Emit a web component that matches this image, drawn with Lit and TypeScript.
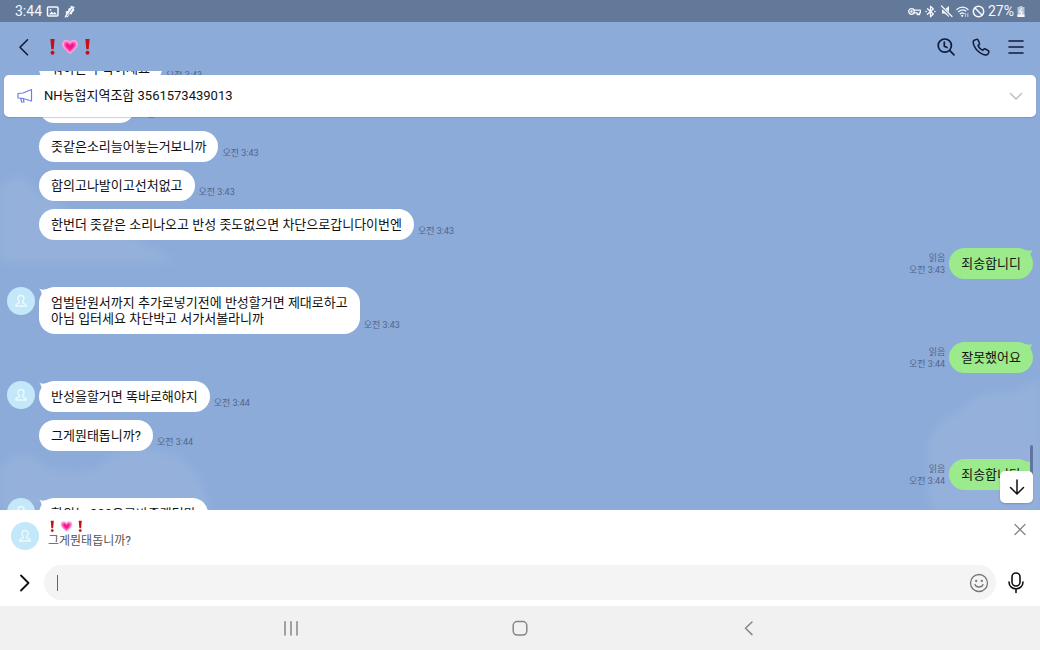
import { LitElement, html, css, svg, nothing } from "lit";
import { customElement, property, state } from "lit/decorators.js";

interface Message {
  mine?: boolean;
  first?: boolean;
  lines: string[];
  time: string;
}

const MESSAGES: Message[] = [
  { lines: ["뭐하는 수작이세요"], time: "오전 3:43" },
  { lines: ["장난하십니까"], time: "오전 3:43" },
  { lines: ["좃같은소리늘어놓는거보니까"], time: "오전 3:43" },
  { lines: ["합의고나발이고선처없고"], time: "오전 3:43" },
  { lines: ["한번더 좃같은 소리나오고 반성 좃도없으면 차단으로갑니다이번엔"], time: "오전 3:43" },
  { mine: true, lines: ["죄송합니디"], time: "오전 3:43" },
  { first: true, lines: ["엄벌탄원서까지 추가로넣기전에 반성할거면 제대로하고", "아님 입터세요 차단박고 서가서볼라니까"], time: "오전 3:43" },
  { mine: true, lines: ["잘못했어요"], time: "오전 3:44" },
  { first: true, lines: ["반성을할거면 똑바로해야지"], time: "오전 3:44" },
  { lines: ["그게뭔태돕니까?"], time: "오전 3:44" },
  { mine: true, lines: ["죄송합니다"], time: "오전 3:44" },
  { first: true, lines: ["합의는 300은고바줄랬더만"], time: "오전 3:44" },
];

const heart = svg`
  <path d="M10 18C6 14.5 1.2 11.2 1.2 6.8 1.2 3.800 3.400 2 5.800 2 7.700 2 9.200 3 10 4.500 10.800 3 12.300 2 14.200 2c2.400 0 4.600 1.800 4.600 4.800C18.800 11.200 14 14.500 10 18Z" fill="#ffa0dc"/>
  <path d="M10 15.600C7 13 3.400 10.400 3.400 7.200 3.400 5.300 4.600 4.200 6.200 4.200c1.700 0 3 1.200 3.800 2.800.8-1.600 2.100-2.800 3.800-2.800 1.600 0 2.800 1.100 2.800 3 0 3.200-3.600 5.800-6.600 8.400Z" fill="#ff4fb4"/>
  <path d="M10 13.600C8 11.800 5.400 10 5.400 7.800c0-1 .6-1.600 1.400-1.600C8.200 6.200 9.400 7.400 10 9c.6-1.600 1.800-2.800 3.200-2.800.8 0 1.400.6 1.400 1.600 0 2.200-2.600 4-4.600 5.800Z" fill="#f5168c"/>`;
const bang = svg`
  <path d="M2.600 1h4.800L6.300 12.500H3.700Z" fill="#c80f14"/><circle cx="5" cy="16.300" r="2.200" fill="#c80f14"/>`;

@customElement("room-name")
export class RoomName extends LitElement {
  static styles = css`
    :host { display: flex; align-items: center; }
    .bang { height: var(--mark, 18px); }
    .heart { height: var(--mark, 18px); margin: 0 4px; }
  `;
  render() {
    return html`
      <svg class="bang" viewBox="0 0 10 20" aria-hidden="true">${bang}</svg>
      <svg class="heart" viewBox="0 0 20 20" role="img" aria-label="❗💗❗">${heart}</svg>
      <svg class="bang" viewBox="0 0 10 20" aria-hidden="true">${bang}</svg>`;
  }
}

@customElement("user-avatar")
export class UserAvatar extends LitElement {
  static styles = css`
    :host { display: block; width: 28px; height: 28px; }
    .face { display: block; width: 100%; height: 100%; }
  `;
  render() {
    return html`<svg class="face" viewBox="0 0 28 28" aria-hidden="true">
      <circle cx="14" cy="14" r="14" fill="#c3e8f9"/>
      <path d="M14 8.500c-1.900 0-3 1.300-3 3 0 1.300.6 2.300 1.300 2.900v1.400c-1.800.5-3.500 1-3.500 3.200h10.400c0-2.200-1.700-2.700-3.500-3.200v-1.400c.7-.6 1.300-1.600 1.300-2.900 0-1.700-1.100-3-3-3Z" fill="none" stroke="#eefaff" stroke-width="1.300" stroke-linejoin="round"/>
    </svg>`;
  }
}

@customElement("chat-message")
export class ChatMessage extends LitElement {
  @property({ attribute: false }) message!: Message;

  static styles = css`
    :host { display: block; }
    .row { display: grid; grid-template-columns: 28px auto auto; justify-content: start; column-gap: 4px; padding: 0 7px; }
    .row.mine { display: flex; justify-content: flex-end; gap: 4px; }
    .wrap { position: relative; }
    .bubble { margin: 0; padding: 8px 12px 7px; border-radius: 16px; background: #fff; color: #111; font-size: 13px; line-height: 16px; }
    .mine .bubble { background: #9bea8c; }
    .line { display: block; white-space: nowrap; }
    .tail { position: absolute; top: 0; left: 0; width: 12px; height: 12px; }
    .mine .tail { left: auto; right: 0; transform: scaleX(-1); }
    .meta { align-self: end; display: flex; flex-direction: column; padding-bottom: 3px; color: #52658a; font-size: 9px; line-height: 12px; white-space: nowrap; }
    .mine .meta { text-align: right; }
  `;

  render() {
    const m = this.message;
    const tail = m.first || m.mine
      ? html`<svg class="tail" viewBox="0 0 12 12" aria-hidden="true">
          <path d="M0 1C2 3.500 5 3 11 1L3 10C3 6 2 4 0 1Z" fill=${m.mine ? "#9bea8c" : "#ffffff"}/></svg>`
      : nothing;
    const bubble = html`<div class="wrap">${tail}
      <p class="bubble">${m.lines.map((l) => html`<span class="line">${l}</span>`)}</p></div>`;
    if (m.mine) {
      return html`<div class="row mine">
        <div class="meta"><span>읽음</span><time>${m.time}</time></div>${bubble}</div>`;
    }
    return html`<div class="row">
      ${m.first ? html`<user-avatar></user-avatar>` : html`<span></span>`}
      ${bubble}
      <div class="meta"><time>${m.time}</time></div></div>`;
  }
}

@customElement("app-root")
export class AppRoot extends LitElement {
  @state() private draft = "";

  static styles = css`
    :host { display: flex; flex-direction: column; height: 100vh; overflow: hidden; background: #8cabd9; color: #111; font-family: Roboto, "Noto Sans CJK KR", sans-serif; }
    button { display: grid; place-items: center; margin: 0; padding: 0; border: 0; background: none; color: inherit; font: inherit; }
    svg { display: block; fill: none; stroke: currentColor; stroke-linecap: round; stroke-linejoin: round; }
    .status { flex: none; display: flex; align-items: center; justify-content: space-between; height: 22px; padding: 0 15px; background: #637999; color: #f5f8ff; font-size: 14px; line-height: 22px; }
    .group { display: flex; align-items: center; gap: 4px; }
    .group.right { gap: 3px; }
    .sicon { width: 13px; height: 13px; }
    .narrow { width: 8px; height: 13px; }
    .header { flex: none; display: flex; align-items: center; height: 49px; padding: 0 14px 0 12px; color: #101a3a; }
    .title { flex: 1; display: flex; margin: 0 0 0 12px; font-size: 16px; }
    .actions { display: flex; gap: 15px; }
    .icon { width: 20px; height: 20px; }
    .icon24 { width: 24px; height: 24px; }
    .chat { flex: 1; position: relative; min-height: 0; }
    .sky { position: absolute; inset: 0; width: 100%; height: 100%; stroke: none; }
    .list { position: relative; display: flex; flex-direction: column; gap: 8px; height: 100%; overflow-y: auto; scrollbar-width: none; }
    .thumb { position: absolute; right: 7px; bottom: 26px; width: 3px; height: 39px; border-radius: 2px; background: #5f759d; }
    .down { position: absolute; right: 7px; bottom: 7px; width: 33px; height: 32px; border-radius: 5px; background: #fff; box-shadow: 0 1px 2px #4a628a66; }
    .notice { position: absolute; top: 4px; left: 4px; right: 4px; display: flex; align-items: center; gap: 10px; padding: 13px 12px; border-radius: 5px; background: #fff; box-shadow: 0 1px 1px #5c75a455; font-size: 13px; line-height: 16px; }
    .notice-text { flex: 1; margin: 0; }
    .horn { color: #6780e8; width: 18px; height: 16px; }
    .fold { color: #b5b5b5; width: 16px; height: 16px; }
    .preview { flex: none; display: flex; align-items: flex-start; gap: 9px; padding: 10px 10px 0 11px; background: #fff; }
    .preview-body { flex: 1; --mark: 13px; }
    .preview-name { padding-left: 1px; }
    .preview-text { margin: 0; color: #555; font-size: 12px; line-height: 16px; }
    .preview-avatar { margin-top: 2px; }
    .close { color: #888; }
    .composer { flex: none; display: flex; align-items: center; gap: 8px; padding: 15px 12px 6px; background: #fff; }
    .field { flex: 1; display: flex; align-items: center; height: 35px; padding: 0 7px 0 13px; border-radius: 18px; background: #f4f4f4; }
    .caret { width: 1px; height: 16px; background: #666; }
    .input { flex: 1; min-width: 0; border: 0; padding: 0; outline: 0; background: none; font: inherit; font-size: 14px; }
    .smile { color: #777; }
    .nav { flex: none; display: flex; justify-content: space-around; align-items: center; height: 44px; padding: 0 177px; background: #f1f1f1; color: #868686; }
  `;

  async firstUpdated() {
    const list = this.renderRoot.querySelector(".list") as HTMLElement;
    await Promise.all(
      Array.from(this.renderRoot.querySelectorAll("chat-message")).map((el) => (el as ChatMessage).updateComplete)
    );
    list.scrollTop = 18;
  }

  private onInput(e: Event) {
    this.draft = (e.target as HTMLInputElement).value;
  }

  render() {
    return html`
      <div class="status">
        <div class="group">
          <span>3:44</span>
          <svg class="sicon" viewBox="0 0 13 13"><rect x="1.500" y="2" width="10.500" height="9" rx="1" stroke-width="1.500"/><path d="M3 9.500 5.500 6.500 7.300 8.300 8.800 7 11 9.500Z" fill="currentColor" stroke="none"/><circle cx="4.500" cy="4.800" r=".9" fill="currentColor" stroke="none"/></svg>
          <svg class="sicon" viewBox="0 0 13 13"><path d="M8 .8 11.800 2 10.600 3.800 11.600 5 9.500 7.200 8.500 9.500 6.500 9 5 12 1.500 12.500 3.200 8.500 2.500 6.500 5 6 5.500 3.500 7.200 3Z" fill="currentColor" stroke="none"/><path d="M4 11 9 4" stroke="#637999" stroke-width=".8"/></svg>
        </div>
        <div class="group right">
          <svg class="sicon" viewBox="0 0 13 13" stroke-width="1.300"><circle cx="3.500" cy="6.500" r="2.800"/><circle cx="3.500" cy="6.500" r=".6"/><path d="M6.200 5.200H12.400V7.800H11.500V9.500H9.200V7.800H6.200"/></svg>
          <svg class="sicon" viewBox="0 0 13 13" stroke-width="1.300"><path d="M3.500 3.800 9.300 9 6.500 11.700V1.300L9.300 4 3.500 9.200M2 6.500h.3M10.700 6.500h.3"/></svg>
          <svg class="sicon" viewBox="0 0 13 13"><path d="M2 4.500h2.500L9 1v11L4.500 8.500H2Z" fill="currentColor" stroke="none"/><path d="M1.500 1.500 11.500 11.500" stroke="#637999" stroke-width="2.600"/><path d="M1.500 1 12 11.500" stroke-width="1.200"/></svg>
          <svg class="sicon" viewBox="0 0 13 13" stroke-width="1.200"><path d="M.8 4.500C4 1.300 9 1.300 12 4.500M2.500 6.700C5 4.500 8 4.500 9.800 6M4.300 8.800C5.500 7.800 7 7.800 8 8.500"/><circle cx="6.200" cy="10.800" r=".5"/><path d="M9.500 11.500V8.500M11.800 8.500v3" opacity=".6"/></svg>
          <svg class="sicon" viewBox="0 0 13 13" stroke-width="1.500"><circle cx="6.500" cy="6.500" r="5.200"/><path d="M3 3 10 10"/></svg>
          <span>27%</span>
          <svg class="narrow" viewBox="0 0 8 13"><path d="M2.500 1h3v1H7.500V12H.5V2h2Z" fill="currentColor" stroke="none" opacity=".6"/><path d="M.5 9.500h7V12H.5Z" fill="currentColor" stroke="none"/><path d="M4.500 3.500 2.500 7H5.300L3.800 10" stroke="#fff" stroke-width="1"/></svg>
        </div>
      </div>

      <header class="header">
        <button aria-label="뒤로"><svg class="icon24" viewBox="0 0 24 24" stroke-width="1.600"><path d="M15.500 4.800 8 12.300 15.500 19.800"/></svg></button>
        <h1 class="title"><room-name></room-name></h1>
        <div class="actions">
          <button aria-label="검색"><svg class="icon" viewBox="0 0 20 20" stroke-width="1.700"><circle cx="8.800" cy="8.600" r="6.600"/><path d="M13.600 13.400 18 17.800M8.300 5.200V9.300L11 10.500"/></svg></button>
          <button aria-label="통화"><svg class="icon" viewBox="0 0 20 20" stroke-width="1.500"><path d="M5.400 2.400 3.300 3.200C2 4 1.900 6 3 8.500c1.700 3.800 4.600 6.900 8.400 8.600 2.500 1.100 4.700 1.100 5.600-.3l.8-1.500c.3-.6.100-1.200-.5-1.600l-3-1.700c-.6-.3-1.200-.2-1.600.3l-.9 1.100c-1.900-.8-3.900-2.800-4.800-4.800l1.100-1c.5-.4.6-1 .3-1.600L7 2.900c-.4-.6-1-.8-1.600-.5Z"/></svg></button>
          <button aria-label="메뉴"><svg class="icon" viewBox="0 0 20 20" stroke-width="1.600"><path d="M3 4H17M3 10H17M3 16H17"/></svg></button>
        </div>
      </header>

      <main class="chat">
        <svg class="sky" viewBox="0 0 1040 438" preserveAspectRatio="none" aria-hidden="true">
          <defs><filter id="soft"><feGaussianBlur stdDeviation="5"/></filter></defs>
          <g fill="#a9c0e0" opacity=".32" filter="url(#soft)">
            <path d="M0 118C15 100 30 104 34 120 62 130 76 150 100 158 140 164 150 180 180 190H0Z"/>
            <path d="M0 400C12 378 34 380 44 396 62 400 80 402 100 396 112 378 140 372 158 380 190 386 200 400 210 438H0Z"/>
            <path d="M928 392C926 362 940 346 958 342 970 324 992 318 1010 322L1040 308V438H930Z"/>
          </g>
        </svg>
        <div class="list">
          ${MESSAGES.map((m) => html`<chat-message .message=${m}></chat-message>`)}
        </div>
        <div class="notice">
          <svg class="horn" viewBox="0 0 18 16" stroke-width="1.200"><path d="M2 5.500 7 5 15.500 1.500V13L7 10.500 2 10ZM2 5.500V10M4.800 10.300 5.600 14H8L7.400 10.800"/></svg>
          <p class="notice-text">NH농협지역조합 3561573439013</p>
          <button aria-label="펼치기"><svg class="fold" viewBox="0 0 16 16" stroke-width="1.200"><path d="M2.500 5.500 8 11 13.500 5.500"/></svg></button>
        </div>
        <div class="thumb"></div>
        <button class="down" aria-label="아래로"><svg class="icon" viewBox="0 0 20 20" stroke-width="1.500"><path d="M10 3V16.500M3.500 10.500 10 17 16.500 10.500"/></svg></button>
      </main>

      <section class="preview">
        <user-avatar class="preview-avatar"></user-avatar>
        <div class="preview-body">
          <room-name class="preview-name"></room-name>
          <p class="preview-text">그게뭔태돕니까?</p>
        </div>
        <button class="close" aria-label="닫기"><svg class="icon" viewBox="0 0 20 20" stroke-width="1.300"><path d="M5 4.500 15 14.500M15 4.500 5 14.500"/></svg></button>
      </section>

      <form class="composer" @submit=${(e: Event) => e.preventDefault()}>
        <button type="button" aria-label="더보기"><svg class="icon24" viewBox="0 0 24 24" stroke-width="1.800"><path d="M9 4.500 16.500 12 9 19.500"/></svg></button>
        <div class="field">
          <span class="caret"></span>
          <input class="input" aria-label="메시지 입력" .value=${this.draft} @input=${this.onInput} />
          <button type="button" class="smile" aria-label="이모티콘"><svg class="icon" viewBox="0 0 20 20" stroke-width="1.300"><circle cx="10" cy="10" r="8.500"/><path d="M6 11.500C7 14.800 13 14.800 14 11.500"/><circle cx="7.200" cy="8" r=".5"/><circle cx="12.800" cy="8" r=".5"/></svg></button>
        </div>
        <button type="button" aria-label="음성"><svg class="icon24" viewBox="0 0 24 24" stroke-width="1.600"><rect x="8" y="2" width="8" height="13" rx="4"/><path d="M5 11C5 20 19 20 19 11M12 18V21.500"/></svg></button>
      </form>

      <nav class="nav">
        <button aria-label="최근 앱"><svg class="icon" viewBox="0 0 20 20" stroke-width="1.500"><path d="M4 3.800V17M10 3.800V17M16 3.800V17"/></svg></button>
        <button aria-label="홈"><svg class="icon" viewBox="0 0 20 20" stroke-width="1.500"><rect x="3.200" y="3.500" width="13.600" height="13.600" rx="4"/></svg></button>
        <button aria-label="뒤로"><svg class="icon" viewBox="0 0 20 20" stroke-width="1.500"><path d="M13 4 6.500 10.300 13 16.600"/></svg></button>
      </nav>
    `;
  }
}
